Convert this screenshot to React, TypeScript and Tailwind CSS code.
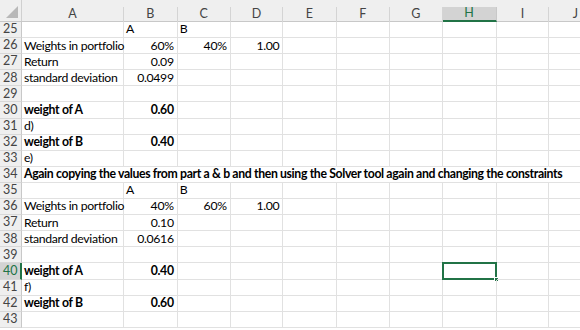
import React from "react";

type Cell = { v?: string; align?: "l" | "r"; bold?: boolean };

const COLS = ["A", "B", "C", "D", "E", "F", "G", "H", "I", "J"];
const W = [102, 53.67, 53, 52.67, 53.33, 53.33, 52.67, 54, 52.67, 53.33];

const rows: { n: number; cells?: Cell[]; span?: string }[] = [
  { n: 25, cells: [{}, { v: "A" }, { v: "B" }] },
  { n: 26, cells: [{ v: "Weights in portfolio" }, { v: "60%", align: "r" }, { v: "40%", align: "r" }, { v: "1.00", align: "r" }] },
  { n: 27, cells: [{ v: "Return" }, { v: "0.09", align: "r" }] },
  { n: 28, cells: [{ v: "standard deviation" }, { v: "0.0499", align: "r" }] },
  { n: 29, cells: [] },
  { n: 30, cells: [{ v: "weight of A", bold: true }, { v: "0.60", align: "r", bold: true }] },
  { n: 31, cells: [{ v: "d)" }] },
  { n: 32, cells: [{ v: "weight of B", bold: true }, { v: "0.40", align: "r", bold: true }] },
  { n: 33, cells: [{ v: "e)" }] },
  { n: 34, span: "Again copying the values from part a & b and then using the Solver tool again and changing the constraints" },
  { n: 35, cells: [{}, { v: "A" }, { v: "B" }] },
  { n: 36, cells: [{ v: "Weights in portfolio" }, { v: "40%", align: "r" }, { v: "60%", align: "r" }, { v: "1.00", align: "r" }] },
  { n: 37, cells: [{ v: "Return" }, { v: "0.10", align: "r" }] },
  { n: 38, cells: [{ v: "standard deviation" }, { v: "0.0616", align: "r" }] },
  { n: 39, cells: [] },
  { n: 40, cells: [{ v: "weight of A", bold: true }, { v: "0.40", align: "r", bold: true }] },
  { n: 41, cells: [{ v: "f)" }] },
  { n: 42, cells: [{ v: "weight of B", bold: true }, { v: "0.60", align: "r", bold: true }] },
  { n: 43, cells: [] },
];

export default function App() {
  return (
    <div
      className="w-[580px] h-[330px] overflow-hidden bg-white text-[12.25px] leading-none text-black"
      style={{ fontFamily: "Lato, 'Liberation Sans', sans-serif" }}
    >
      {/* header */}
      <div className="flex h-[22px] bg-[#efefef] border-b border-[#c8c8c8]">
        <div className="relative w-[22px] shrink-0 border-r border-[#d0d0d0]">
          <div className="absolute right-[3px] bottom-[3px] w-0 h-0 border-l-[12px] border-l-transparent border-b-[12px] border-b-[#b8b8b8]" />
        </div>
        {COLS.map((c, i) => (
          <div key={c} className="shrink-0 pt-[7px]" style={{ width: W[i] }}>
            <div
              className={
                c === "H"
                  ? "h-[15px] flex items-center justify-center text-[12.5px] bg-[#d3d3d3] text-[#217346] border-b-2 border-[#217346] border-r border-r-[#c8c8c8]"
                  : "h-[15px] flex items-center justify-center text-[12.5px] text-[#444] border-r border-[#d4d4d4]"
              }
            >
              {c}
            </div>
          </div>
        ))}
      </div>
      {rows.map((r) => (
        <div key={r.n} className="flex h-[16.1px]">
          <div
            className={
              r.n === 40
                ? "w-[22px] shrink-0 flex items-center pl-[3px] text-[12.5px] bg-[#d3d3d3] text-[#217346] border-r-2 border-[#217346] border-b border-b-[#d8d8d8]"
                : "w-[22px] shrink-0 flex items-center pl-[3px] text-[12.5px] bg-[#efefef] text-[#444] border-r border-[#c8c8c8] border-b border-b-[#d8d8d8]"
            }
          >
            {r.n}
          </div>
          {r.span ? (
            <div className="flex-1 flex items-center pl-[2px] font-bold whitespace-nowrap tracking-[-0.36px] border-b border-[#e1e1e1]">
              {r.span}
            </div>
          ) : (
            COLS.map((c, i) => {
              const cell = r.cells?.[i] ?? {};
              const sel = r.n === 40 && c === "H";
              return (
                <div
                  key={c}
                  className={
                    "relative shrink-0 flex items-center border-r border-b border-[#e1e1e1] whitespace-nowrap tracking-[-0.33px] " +
                    (cell.align === "r" ? "justify-end pr-[3px] " : "pl-[2px] ") +
                    (cell.bold ? "font-bold" : "")
                  }
                  style={{ width: W[i] }}
                >
                  {cell.v}
                  {sel && (
                    <>
                      <div className="absolute -left-[1px] -top-[1px] -right-[1px] -bottom-[1px] border-2 border-[#217346]" />
                      <div className="absolute -right-[3px] -bottom-[3px] w-[5px] h-[5px] bg-[#217346] border border-white" />
                    </>
                  )}
                </div>
              );
            })
          )}
        </div>
      ))}
    </div>
  );
}
